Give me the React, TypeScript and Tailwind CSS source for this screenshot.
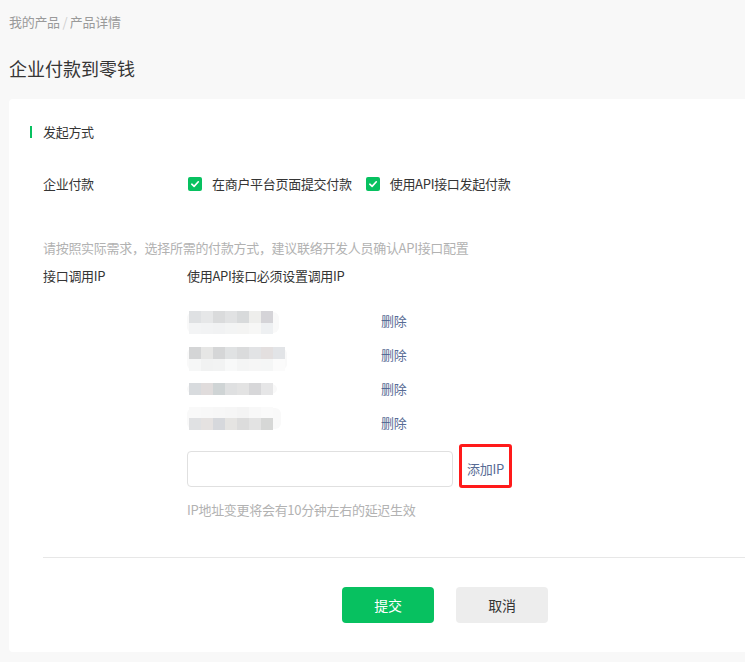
import React from "react";

const font = { fontFamily: '"Noto Sans CJK SC", "Microsoft YaHei", sans-serif' };

type Block = { rows: { y: number; h: number; colors: string[] }[]; feather?: { y: number; h: number; w: number } };

const blocks: Block[] = [
  {
    feather: { y: 7, h: 23, w: 92 },
    rows: [
      { y: 7, h: 12, colors: ["#dfe1e3", "#e6e7e8", "#dadbdc", "#e1e2e3", "#d8dadb", "#eeeeec", "#d5d4d8"] },
      { y: 19, h: 11, colors: ["#f3f4f5", "#f2f3f4", "#f1f2f3", "#f3f4f4", "#f4f4f3", "#f7f7f6", "#eef0f2"] },
    ],
  },
  {
    feather: { y: 9, h: 24, w: 100 },
    rows: [
      { y: 9, h: 12, colors: ["#d4d5d6", "#e6e6e5", "#d5d6d7", "#e0e2e3", "#dadbdc", "#e2e3e5", "#e3dfdf", "#e2e4e7"] },
      { y: 21, h: 12, colors: ["#f6f7f7", "#f1f2f2", "#f2f3f3", "#f8f9f9", "#f4f5f5", "#f6f6f6", "#f5f6f6", "#fbfbfb"] },
    ],
  },
  {
    feather: { y: 11, h: 12, w: 90 },
    rows: [
      { y: 11, h: 12, colors: ["#d8dbde", "#e0dcdc", "#cfd4d5", "#dfe0e1", "#e3e3e3", "#d7d7d9", "#e6e6e7"] },
    ],
  },
  {
    feather: { y: 1, h: 23, w: 94 },
    rows: [
      { y: 1, h: 11, colors: ["#f9f9f9", "#f8f8f8", "#f7f7f7", "#f6f6f6", "#f4f4f4", "#f8f8f8", "#fafafa"] },
      { y: 12, h: 12, colors: ["#e0e1e3", "#e5e2e1", "#d6d8dc", "#e5e4e2", "#dcdcdc", "#e3e3e3", "#d6d7d6"] },
    ],
  },
];

function BlurBlock({ b }: { b: Block }) {
  return (
    <svg width="194" height="34" viewBox="0 0 194 34" className="block">
      {b.feather && (
        <rect x="0" y={b.feather.y + 1} width={b.feather.w} height={b.feather.h - 2} rx="6" fill="#f9f9f9" />
      )}
      {b.rows.map((r, i) =>
        r.colors.map((c, j) => (
          <rect key={`${i}-${j}`} x={2 + j * 12} y={r.y} width="12" height={r.h} fill={c} />
        ))
      )}
    </svg>
  );
}

function Check() {
  return (
    <span className="flex h-[14px] w-[14px] items-center justify-center rounded-[2px] bg-[#07c160]">
      <svg width="10" height="10" viewBox="0 0 10 10">
        <path d="M1.8 5.2 L4.1 7.4 L8.3 2.8" fill="none" stroke="#fff" strokeWidth="1.6" strokeLinecap="round" strokeLinejoin="round" />
      </svg>
    </span>
  );
}

export default function App() {
  return (
    <div className="min-h-[662px] w-full overflow-hidden bg-[#f8f8f8] text-[13px] tracking-[-0.3px] text-[#353535]" style={font}>
      <div className="pl-[9px] pt-[12px] leading-[20px] text-[#9a9a9a]">
        我的产品 <span className="text-[#cfcfcf]">/</span> 产品详情
      </div>
      <div className="mt-[23px] pl-[9px] text-[18px] leading-[26px] tracking-normal text-[#353535]">企业付款到零钱</div>

      <div className="ml-[9px] mt-[18px] w-[780px] rounded-[4px] bg-white pb-[29px] pt-[23px]">
        <div className="flex items-center pl-[21px]">
          <span className="h-[12px] w-[2px] bg-[#07c160]" />
          <span className="ml-[11px] leading-[20px]">发起方式</span>
        </div>

        <div className="mt-[32px] flex items-center pl-[34px] leading-[20px]">
          <span className="w-[145px]">企业付款</span>
          <Check />
          <span className="ml-[10px]">在商户平台页面提交付款</span>
          <span className="ml-[14px]">
            <Check />
          </span>
          <span className="ml-[10px]">使用API接口发起付款</span>
        </div>

        <div className="mt-[44px] pl-[34px] leading-[20px] text-[#b2b2b2]">
          请按照实际需求，选择所需的付款方式，建议联络开发人员确认API接口配置
        </div>

        <div className="mt-[8px] flex pl-[34px] leading-[20px]">
          <span className="w-[144px]">接口调用IP</span>
          <span>使用API接口必须设置调用IP</span>
        </div>

        <div className="ml-[178px] mt-[18px]">
          {blocks.map((b, i) => (
            <div key={i} className="flex h-[34px] items-center">
              <BlurBlock b={b} />
              <a className="cursor-pointer leading-[20px] text-[#576b95]">删除</a>
            </div>
          ))}

          <div className="relative mt-[11px] flex items-center">
            <input className="h-[36px] w-[266px] rounded-[4px] border border-[#e0e0e0] bg-white px-2 outline-none" />
            <span className="ml-[14px] leading-[20px] text-[#576b95]">添加IP</span>
            <span className="pointer-events-none absolute left-[272px] top-[-7px] h-[44px] w-[53px] rounded-[3px] border-[3px] border-[#ff1a1a]" />
          </div>

          <div className="mt-[13px] leading-[20px] text-[#b2b2b2]">IP地址变更将会有10分钟左右的延迟生效</div>
        </div>

        <div className="ml-[34px] mt-[37px] border-t border-[#e7e7e7]" />

        <div className="ml-[333px] mt-[29px] flex gap-[22px]">
          <button className="h-[36px] w-[92px] rounded-[4px] bg-[#07c160] text-[14px] text-white">提交</button>
          <button className="h-[36px] w-[92px] rounded-[4px] bg-[#ededed] text-[14px] text-[#353535]">取消</button>
        </div>
      </div>
    </div>
  );
}
